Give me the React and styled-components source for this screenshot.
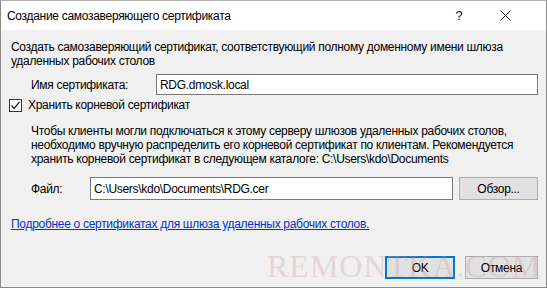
import React from 'react';
import styled, { createGlobalStyle } from 'styled-components';

const GlobalStyle = createGlobalStyle`
	html, body {
		margin: 0;
		padding: 0;
		background: #f0f0f0;
	}
	body {
		font-family: 'Segoe UI', 'Liberation Sans', Arial, sans-serif;
		font-size: 12px;
		letter-spacing: -0.3px;
		color: #000;
	}
`;

const Window = styled.div`
	position: relative;
	width: 547px;
	height: 288px;
	box-sizing: border-box;
	border: 1px solid #8a8a8a;
	border-top-color: #b0b0b0;
	background: #f0f0f0;
	display: flex;
	flex-direction: column;
	overflow: hidden;
`;

const TitleBar = styled.div`
	height: 29px;
	background: #fff;
	display: flex;
	align-items: center;
	padding: 0 18px 0 6px;
	flex-shrink: 0;
`;

const Title = styled.div`
	flex: 1;
	font-size: 12px;
`;

const TitleButton = styled.div`
	width: 46px;
	height: 29px;
	display: flex;
	align-items: center;
	justify-content: center;
	color: #111;
	font-size: 13px;
`;

const Body = styled.div`
	flex: 1;
	display: flex;
	flex-direction: column;
	padding: 10px 8px 0 10px;
`;

const Intro = styled.p`
	margin: 0;
	line-height: 14px;
`;

const FieldRow = styled.div`
	display: flex;
	align-items: center;
	margin-top: ${({ $top }) => $top}px;
	padding-left: ${({ $indent }) => $indent}px;
`;

const Label = styled.span`
	width: ${({ $width }) => $width}px;
	flex-shrink: 0;
`;

const Input = styled.div`
	flex: 1;
	height: ${({ $h }) => $h}px;
	box-sizing: border-box;
	border: 1px solid #7a7a7a;
	background: #fff;
	display: flex;
	align-items: center;
	padding-left: 3px;
`;

const CheckRow = styled.label`
	display: flex;
	align-items: center;
	gap: 6px;
	margin-top: 3px;
	margin-left: -2px;
`;

const Box = styled.span`
	width: 13px;
	height: 13px;
	box-sizing: border-box;
	border: 1px solid #333;
	background: #fff;
	display: flex;
	align-items: center;
	justify-content: center;
`;

const Note = styled.p`
	margin: 12px 0 0 20px;
	line-height: 14px;
`;

const Button = styled.div`
	width: ${({ $w }) => $w}px;
	height: 23px;
	box-sizing: border-box;
	border: ${({ $default }) => ($default ? '2px solid #0078d7' : '1px solid #adadad')};
	background: #e1e1e1;
	display: flex;
	align-items: center;
	justify-content: center;
	flex-shrink: 0;
`;

const Link = styled.a`
	margin-top: 17px;
	color: #0033cc;
	text-decoration: underline;
	cursor: pointer;
`;

const Footer = styled.div`
	display: flex;
	justify-content: flex-end;
	gap: 10px;
	margin-top: 25px;
`;

const Watermark = styled.div`
	position: absolute;
	left: 266px;
	bottom: 2px;
	font-family: 'Liberation Serif', 'Times New Roman', serif;
	font-size: 32px;
	letter-spacing: 1px;
	color: rgba(200, 150, 150, 0.3);
	pointer-events: none;
`;

const App = () => {
	return (
		<>
			<GlobalStyle />
			<Window>
				<TitleBar>
					<Title>Создание самозаверяющего сертификата</Title>
					<TitleButton>?</TitleButton>
					<TitleButton>
						<svg width="11" height="11" viewBox="0 0 11 11">
							<path d="M0.5 0.5 L10.5 10.5 M10.5 0.5 L0.5 10.5" stroke="#111" strokeWidth="1" />
						</svg>
					</TitleButton>
				</TitleBar>
				<Body>
					<Intro>
						Создать самозаверяющий сертификат, соответствующий полному доменному имени шлюза
						<br />
						удаленных рабочих столов
					</Intro>
					<FieldRow $top={6} $indent={20}>
						<Label $width={125}>Имя сертификата:</Label>
						<Input $h={21}>RDG.dmosk.local</Input>
					</FieldRow>
					<CheckRow>
						<Box>
							<svg width="11" height="11" viewBox="0 0 11 11">
								<path d="M1.5 5.5 L4 8.5 L9.5 2" fill="none" stroke="#222" strokeWidth="1.2" />
							</svg>
						</Box>
						Хранить корневой сертификат
					</CheckRow>
					<Note>
						Чтобы клиенты могли подключаться к этому серверу шлюзов удаленных рабочих столов,
						<br />
						необходимо вручную распределить его корневой сертификат по клиентам. Рекомендуется
						<br />
						хранить корневой сертификат в следующем каталоге: C:\Users\kdo\Documents
					</Note>
					<FieldRow $top={11} $indent={20}>
						<Label $width={59}>Файл:</Label>
						<Input $h={23}>C:\Users\kdo\Documents\RDG.cer</Input>
						<div style={{ width: 6 }} />
						<Button $w={79}>Обзор...</Button>
					</FieldRow>
					<Link>Подробнее о сертификатах для шлюза удаленных рабочих столов.</Link>
					<Footer>
						<Button $w={70} $default>OK</Button>
						<Button $w={73}>Отмена</Button>
					</Footer>
				</Body>
				<Watermark>REMONTKA.COM</Watermark>
			</Window>
		</>
	);
};

export default App;
